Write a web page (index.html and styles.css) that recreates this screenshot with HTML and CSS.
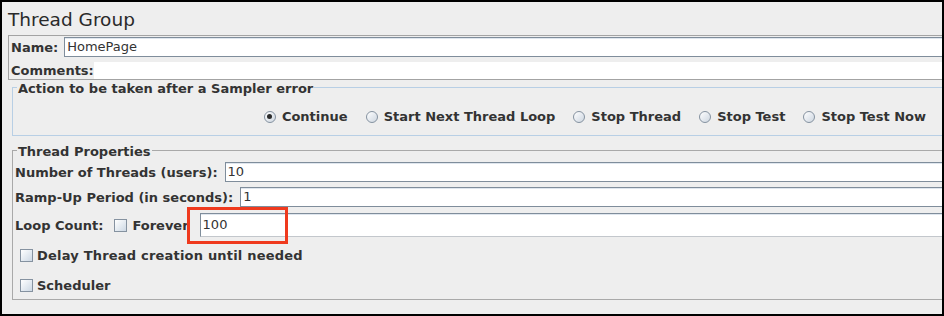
FILE: index.html
```html
<!DOCTYPE html>
<html>
<head>
<meta charset="utf-8">
<link rel="stylesheet" href="styles.css">
</head>
<body>
<div class="frame">
  <h1 class="title">Thread Group</h1>
  <div class="name-panel">
    <div class="name-row">
      <span class="lbl">Name:</span>
      <div class="field name-field">HomePage</div>
    </div>
    <div class="comments-row">
      <span class="lbl">Comments:</span>
      <div class="comments-area"></div>
    </div>
  </div>

  <div class="group group-action">
    <div class="group-head"><span class="group-title">Action to be taken after a Sampler error</span></div>
    <div class="group-body radios">
      <span class="radio"><span class="radio-icon checked"></span>Continue</span>
      <span class="radio"><span class="radio-icon"></span>Start Next Thread Loop</span>
      <span class="radio"><span class="radio-icon"></span>Stop Thread</span>
      <span class="radio"><span class="radio-icon"></span>Stop Test</span>
      <span class="radio"><span class="radio-icon"></span>Stop Test Now</span>
    </div>
  </div>

  <div class="group group-props">
    <div class="group-head"><span class="group-title">Thread Properties</span></div>
    <div class="group-body props">
      <div class="prow row-threads">
        <span class="lbl">Number of Threads (users):</span>
        <div class="field">10</div>
      </div>
      <div class="prow row-ramp">
        <span class="lbl">Ramp-Up Period (in seconds):</span>
        <div class="field">1</div>
      </div>
      <div class="prow row-loop">
        <span class="lbl">Loop Count:</span>
        <span class="check check-forever"></span>
        <span class="lbl">Forever</span>
        <div class="field field-loop">100</div>
      </div>
      <div class="prow row-delay">
        <span class="check"></span>
        <span class="lbl lbl-wide">Delay Thread creation until needed</span>
      </div>
      <div class="prow row-sched">
        <span class="check"></span>
        <span class="lbl">Scheduler</span>
      </div>
    </div>
  </div>

  <div class="highlight"></div>
</div>
</body>
</html>
```

FILE: styles.css
```css
* {
  box-sizing: border-box;
}

html, body {
  margin: 0;
  padding: 0;
  background: #eeeeee;
}

.frame {
  position: relative;
  width: 944px;
  height: 316px;
  border: 2px solid #000;
  background: #eeeeee;
  overflow: hidden;
  font-family: "DejaVu Sans", sans-serif;
  color: #333333;
}

.title {
  margin: 0 0 4px 0;
  padding: 7px 0 0 6px;
  height: 29px;
  line-height: 22px;
  font-size: 18.5px;
  font-weight: normal;
  color: #2a2a2a;
}

.lbl {
  font-size: 13px;
  font-weight: bold;
  white-space: nowrap;
  line-height: 15px;
}

.lbl-wide {
  letter-spacing: 0.2px;
}

.name-panel {
  margin: 0 -40px 0 6px;
  border: 1px solid #a3a3a3;
  padding: 1px 0 0 2px;
  height: 45px;
}

.name-row {
  display: flex;
  align-items: center;
  height: 20px;
  gap: 6px;
}

.field {
  flex: 1;
  height: 20px;
  background: #ffffff;
  border: 1px solid #7f8d9b;
  border-right: none;
  box-shadow: inset 0 1px 0 #dfe6ee;
  font-size: 13px;
  line-height: 18px;
  padding-left: 2px;
  color: #333333;
  white-space: nowrap;
}

.comments-row {
  display: flex;
  align-items: center;
  height: 17px;
  margin-top: 5px;
}

.comments-area {
  flex: 1;
  height: 17px;
  background: #ffffff;
}

.group {
  margin: 1px -40px 0 10px;
}

.group-head {
  display: flex;
  height: 15px;
}

.group-head::before {
  content: "";
  width: 4px;
  height: 8px;
  align-self: flex-end;
  border-top: 1px solid var(--gc);
  border-left: 1px solid var(--gc);
}

.group-head::after {
  content: "";
  flex: 1;
  height: 8px;
  align-self: flex-end;
  border-top: 1px solid var(--gc);
}

.group-title {
  padding: 0 1px;
  font-size: 13px;
  font-weight: bold;
  line-height: 15px;
  white-space: nowrap;
}

.group-body {
  border: 1px solid var(--gc);
  border-top: none;
}

.group-action {
  --gc: #b8cfe5;
}

.group-props {
  --gc: #a9a9a9;
  margin-top: 8px;
}

.radios {
  height: 40px;
  display: flex;
  justify-content: flex-end;
  align-items: center;
  padding: 2px 55px 0 0;
  gap: 18px;
}

.radio {
  display: flex;
  align-items: center;
  font-size: 13px;
  font-weight: bold;
  white-space: nowrap;
  line-height: 15px;
}

.radio-icon {
  display: flex;
  align-items: center;
  justify-content: center;
  width: 12px;
  height: 12px;
  margin-right: 6px;
  border: 1px solid #8592a0;
  border-radius: 50%;
  background: linear-gradient(135deg, #ffffff 0%, #e3e8ee 55%, #cfd7e0 100%);
}

.radio-icon.checked::after {
  content: "";
  width: 5px;
  height: 5px;
  border-radius: 50%;
  background: #2b2b2b;
}

.props {
  display: flex;
  flex-direction: column;
  padding: 3px 0 4px 2px;
  height: 141px;
}

.prow {
  display: flex;
  align-items: center;
  height: 20px;
}

.row-threads .lbl,
.row-ramp .lbl {
  margin-right: 7px;
}

.row-ramp {
  margin-top: 5px;
}

.row-loop {
  margin-top: 6px;
  height: 24px;
}

.field-loop {
  height: 24px;
  line-height: 22px;
  margin-left: 11px;
  border-bottom-color: #c3c7cc;
}

.check {
  display: block;
  width: 13px;
  height: 13px;
  border: 1px solid #8592a0;
  background: linear-gradient(135deg, #ffffff 0%, #e6ecf2 50%, #cdd8e4 100%);
  margin-right: 4px;
  flex: none;
}

.check-forever {
  margin-left: 11px;
  margin-right: 5px;
}

.row-delay {
  margin-top: 8px;
}

.row-delay .check,
.row-sched .check {
  margin-left: 5px;
}

.row-sched {
  margin-top: 10px;
}

.highlight {
  position: absolute;
  left: 185px;
  top: 205px;
  width: 101px;
  height: 37px;
  border: 3px solid #ef3a1e;
}
```
